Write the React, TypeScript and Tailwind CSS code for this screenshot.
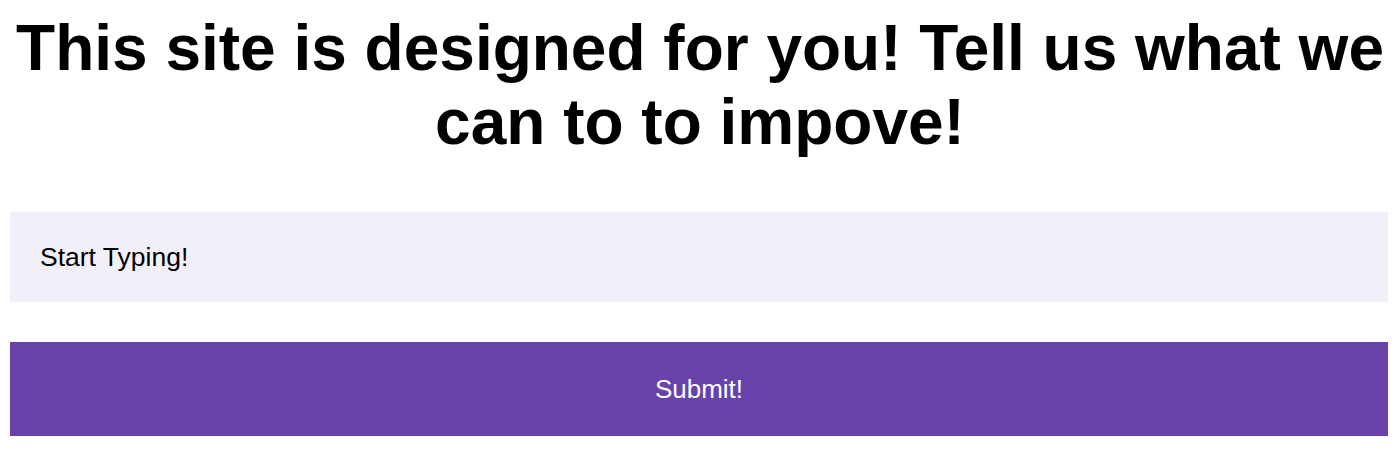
export default function App() {
  return (
    <div className="flex flex-col font-['Liberation_Sans',Arial,sans-serif] bg-white">
      <h1 className="text-center font-bold text-[64px] leading-[74px] text-black pt-[11px]">
        This site is designed for you! Tell us what we can to to impove!
      </h1>
      <div className="flex flex-col pl-[10px] pr-[12px]">
        <input
          type="text"
          placeholder="Start Typing!"
          className="mt-[53px] h-[90px] w-full bg-[#f2eff9] px-[30px] text-[26.5px] text-black placeholder:text-black outline-none"
        />
        <button className="mt-[40px] h-[94px] w-full bg-[#6842aa] text-[26px] text-white">
          Submit!
        </button>
      </div>
    </div>
  );
}
